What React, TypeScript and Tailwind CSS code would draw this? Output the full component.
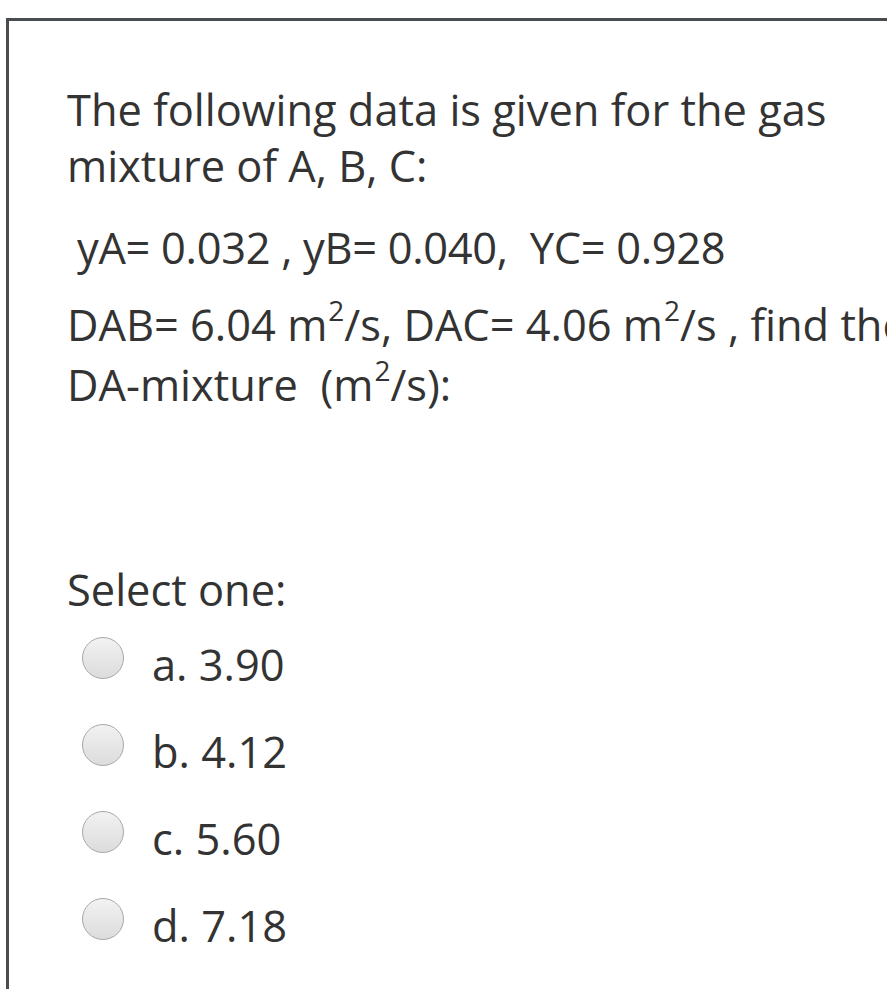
import React from "react";

const options = ["a. 3.90", "b. 4.12", "c. 5.60", "d. 7.18"];

function Sup({ children }: { children: React.ReactNode }) {
  return <sup className="relative top-[-5px] ml-[1px] align-super text-[28px] leading-none">{children}</sup>;
}

function Radio() {
  return (
    <span className="block h-[42px] w-[42px] shrink-0 rounded-full border border-[#a9a9a9] bg-gradient-to-b from-[#f2f2f2] to-[#dcdcdc]" />
  );
}

export default function App() {
  return (
    <div
      className="h-[989px] w-[887px] overflow-hidden bg-white pl-[6px] pt-[18px] text-[#333333]"
      style={{ fontFamily: '"Open Sans", sans-serif' }}
    >
      <div className="h-full border-l-[3px] border-t-[3px] border-[#4a4d50] pl-[58px] pt-[61px]">
        <div className="text-[43.4px] leading-[56px]">
          <p className="pr-[20px]">The following data is given for the gas mixture of A, B, C:</p>
          <p className="mt-[26px] pl-[10px] tracking-[-0.3px]">yA= 0.032 , yB= 0.040,&nbsp; YC= 0.928</p>
          <p className="mt-[21px] whitespace-nowrap">
            DAB= 6.04 m<Sup>2</Sup>/s, DAC= 4.06 m<Sup>2</Sup>/s , find the
          </p>
          <p className="mt-[4px] whitespace-nowrap">
            DA-mixture&nbsp; (m<Sup>2</Sup>/s):
          </p>
          <p className="mt-[149px]">Select one:</p>
        </div>
        <div className="mt-[19px] flex flex-col gap-[31px] pl-[15px]">
          {options.map((o) => (
            <label key={o} className="flex items-start gap-[28px] text-[43.4px] leading-[56px]">
              <Radio />
              <span>{o}</span>
            </label>
          ))}
        </div>
      </div>
    </div>
  );
}
